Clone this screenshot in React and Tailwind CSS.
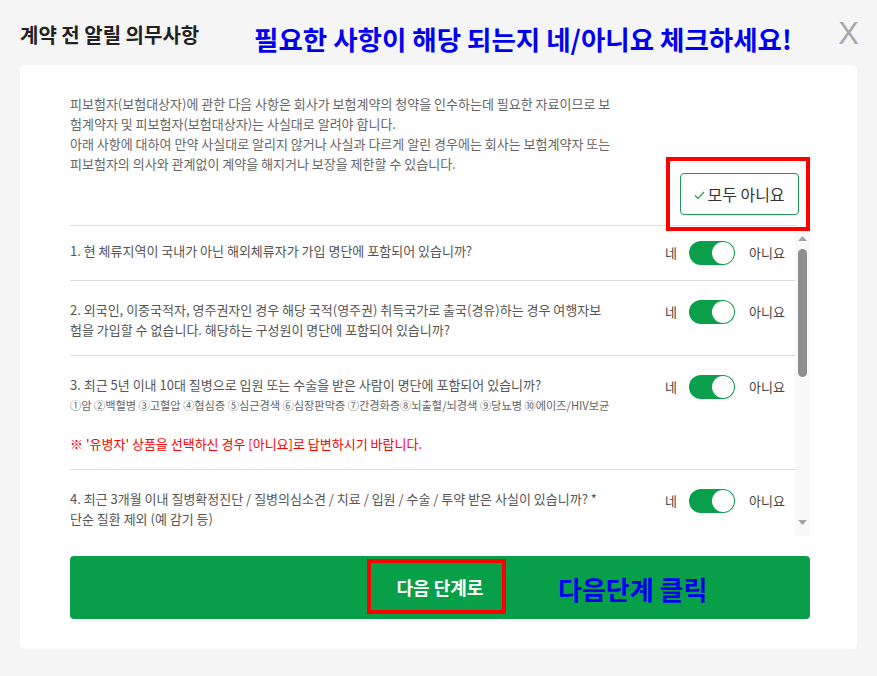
import React from "react";

const font = { fontFamily: '"Noto Sans CJK KR", "Noto Sans", sans-serif' };

function Toggle() {
  return (
    <div className="flex items-center text-[13px] text-[#444]">
      <span className="w-[12px]">네</span>
      <div className="ml-[12px] flex h-[24px] w-[46px] items-center justify-end rounded-full bg-[#0a9f4b] p-[1px]">
        <div className="h-[22px] w-[22px] rounded-full bg-white" />
      </div>
      <span className="ml-[14px]">아니요</span>
    </div>
  );
}

function Row({ children, first, last }) {
  return (
    <div
      className={`flex items-start justify-between pr-[10px] ${
        first ? "pt-[15px] pb-[15px]" : "pt-[19px] pb-[15px]"
      } ${last ? "" : "border-b border-[#dcdcdc]"}`}
    >
      <div className="w-[570px] text-[13px] leading-[20px] text-[#555]">{children}</div>
      <Toggle />
    </div>
  );
}

export default function App() {
  return (
    <div className="min-h-screen w-[877px] bg-[#f5f5f5]" style={font}>
      {/* Header */}
      <div className="relative flex h-[65px] items-start justify-between px-[20px]">
        <h2 className="mt-[21px] text-[20px] font-bold leading-[28px] text-[#222]">계약 전 알릴 의무사항</h2>
        <span className="pointer-events-none absolute left-[254px] top-[22px] whitespace-nowrap text-[26.5px] font-bold leading-[34px] text-[#0000f0]">
          필요한 사항이 해당 되는지 네/아니요 체크하세요!
        </span>
        <button
          className="mt-[14px] mr-[-2px] text-[31px] leading-[40px] text-[#a8a8a8]"
          style={{ fontFamily: '"Liberation Sans", Arial, sans-serif' }}
        >
          X
        </button>
      </div>

      {/* Card */}
      <div className="relative mx-[20px] h-[584px] rounded-[5px] bg-white px-[50px] pt-[29px]">
        {/* Intro */}
        <div className="w-[727px] border-b border-[#dcdcdc] pb-[10px]">
          <p className="text-[13px] leading-[20px] text-[#666]">
            피보험자(보험대상자)에 관한 다음 사항은 회사가 보험계약의 청약을 인수하는데 필요한 자료이므로 보<br />
            험계약자 및 피보험자(보험대상자)는 사실대로 알려야 합니다.<br />
            아래 사항에 대하여 만약 사실대로 알리지 않거나 사실과 다르게 알린 경우에는 회사는 보험계약자 또는<br />
            피보험자의 의사와 관계없이 계약을 해지거나 보장을 제한할 수 있습니다.
          </p>
          <div className="-mt-[1px] flex justify-end">
            <button className="mr-[-2px] flex h-[42px] w-[119px] items-center justify-center rounded-[4px] border border-[#1d9d52] text-[16px] text-[#333]">
              <svg width="11" height="9" viewBox="0 0 11 9" className="mr-[2px] mt-[2px]">
                <polyline points="1,4.5 4,7.5 10,1" fill="none" stroke="#1d9d52" strokeWidth="1.2" />
              </svg>
              모두 아니요
            </button>
          </div>
        </div>

        {/* annotation box */}
        <div className="pointer-events-none absolute left-[646px] top-[92px] h-[74px] w-[144px] border-[4px] border-[#ff0000]" />

        {/* Question list */}
        <div className="flex h-[310px] w-[740px]">
          <div className="h-full w-[725px] overflow-hidden">
            <Row first>1. 현 체류지역이 국내가 아닌 해외체류자가 가입 명단에 포함되어 있습니까?</Row>
            <Row>
              2. 외국인, 이중국적자, 영주권자인 경우 해당 국적(영주권) 취득국가로 출국(경유)하는 경우 여행자보<br />
              험을 가입할 수 없습니다. 해당하는 구성원이 명단에 포함되어 있습니까?
            </Row>
            <Row>
              3. 최근 5년 이내 10대 질병으로 입원 또는 수술을 받은 사람이 명단에 포함되어 있습니까?
              <div className="whitespace-nowrap text-[11.2px] leading-[20px] text-[#666]">
                ①암 ②백혈병 ③고혈압 ④협심증 ⑤심근경색 ⑥심장판막증 ⑦간경화증⑧뇌출혈/뇌경색 ⑨당뇨병 ⑩에이즈/HIV보균
              </div>
              <div className="mt-[19px] text-[#ff0000]">
                ※ '유병자' 상품을 선택하신 경우 [아니요]로 답변하시기 바랍니다.
              </div>
            </Row>
            <Row last>
              4. 최근 3개월 이내 질병확정진단 / 질병의심소견 / 치료 / 입원 / 수술 / 투약 받은 사실이 있습니까? *<br />
              단순 질환 제외 (예 감기 등)
            </Row>
          </div>
          {/* scrollbar */}
          <div className="mt-[5px] flex h-[305px] w-[15px] flex-col items-center bg-[#f9f9f9]">
            <svg width="9" height="5" viewBox="0 0 9 5" className="mt-[5px]">
              <polygon points="0,5 4.5,0 9,5" fill="#a3a3a3" />
            </svg>
            <div className="mt-[8px] h-[128px] w-[9px] rounded-full bg-[#8e8e8e]" />
            <div className="flex-1" />
            <svg width="9" height="5" viewBox="0 0 9 5" className="mb-[11px]">
              <polygon points="0,0 9,0 4.5,5" fill="#a3a3a3" />
            </svg>
          </div>
        </div>

        {/* Next button */}
        <div className="relative mt-[20px] flex h-[63px] w-[740px] items-center justify-center rounded-[4px] bg-[#07a048]">
          <span className="text-[18px] font-bold text-white">다음 단계로</span>
          <div className="pointer-events-none absolute left-[297px] top-[3px] h-[55px] w-[139px] border-[4px] border-[#ff0000]" />
          <span className="pointer-events-none absolute left-[488px] top-[16px] whitespace-nowrap text-[26px] font-bold leading-[34px] text-[#0000f0]">
            다음단계 클릭
          </span>
        </div>
      </div>
    </div>
  );
}
